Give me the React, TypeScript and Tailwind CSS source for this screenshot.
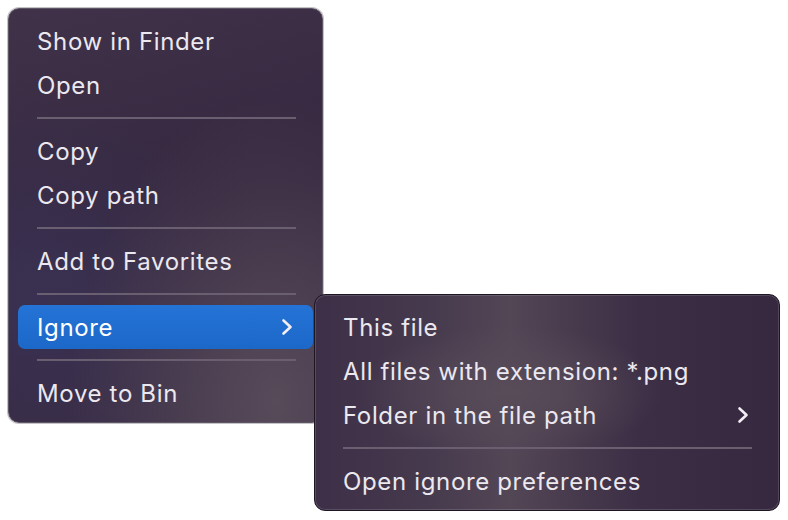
import React from "react";

const Chevron = () => (
  <svg width="12" height="18" viewBox="0 0 12 18" fill="none">
    <polyline points="2.5,2.5 9.5,9 2.5,15.5" stroke="#f2eef4" strokeWidth="2.6" strokeLinecap="round" strokeLinejoin="round" />
  </svg>
);

const Item = ({ label, active, sub }: { label: string; active?: boolean; sub?: boolean }) => (
  <div
    className={
      "h-[44px] flex items-center justify-between pl-[19px] pr-[20px] rounded-[7px] " +
      (active ? "bg-[linear-gradient(180deg,#2473d6,#1c68c9)] text-white" : "text-[#ece8ef]")
    }
  >
    <span className="leading-none pt-[1px]">{label}</span>
    {sub && <Chevron />}
  </div>
);

const Sep = () => (
  <div className="h-[22px] flex items-center pl-[19px] pr-[17px]">
    <div className="h-[2px] w-full bg-[#6a5f70]" />
  </div>
);

const SubItem = ({ label, sub }: { label: string; sub?: boolean }) => (
  <div className="h-[44px] flex items-center justify-between pl-[18px] pr-[20px] text-[#ece8ef]">
    <span className="leading-none pt-[1px]">{label}</span>
    {sub && <Chevron />}
  </div>
);

export default function App() {
  return (
    <div className="relative w-[788px] h-[520px] bg-white font-['Inter','Noto_Sans',sans-serif] text-[24px] tracking-[0.65px]">
      <div className="absolute left-[8px] top-[8px] w-[315px] h-[415px] rounded-[11px] border border-[#5e5566] shadow-[0_0_0_1px_rgba(20,14,24,0.25)] bg-[radial-gradient(ellipse_at_85%_95%,#574b5a_0%,rgba(87,75,90,0)_55%),radial-gradient(ellipse_at_10%_70%,#3a3152_0%,rgba(58,49,82,0)_50%),linear-gradient(165deg,#3f3249_0%,#35273f_50%,#3a2d45_100%)] pt-[10px] pb-[7px] px-[9px] overflow-hidden">
        <Item label="Show in Finder" />
        <Item label="Open" />
        <Sep />
        <Item label="Copy" />
        <Item label="Copy path" />
        <Sep />
        <Item label="Add to Favorites" />
        <Sep />
        <Item label="Ignore" active sub />
        <Sep />
        <Item label="Move to Bin" />
      </div>
      <div className="absolute left-[314px] top-[294px] w-[466px] h-[217px] rounded-[11px] border border-[#1d1522] shadow-[inset_0_0_0_1px_rgba(255,255,255,0.14)] bg-[radial-gradient(ellipse_at_42%_45%,#594c59_0%,rgba(89,76,89,0)_40%),linear-gradient(90deg,#3d2f47_0%,#463a4e_25%,#534655_42%,#3c2e45_70%,#36283f_100%)] pt-[10px] pb-[7px] px-[10px]">
        <SubItem label="This file" />
        <SubItem label="All files with extension: *.png" />
        <SubItem label="Folder in the file path" sub />
        <div className="h-[22px] flex items-center pl-[18px] pr-[17px]">
          <div className="h-[2px] w-full bg-[#6a5f70]" />
        </div>
        <SubItem label="Open ignore preferences" />
      </div>
    </div>
  );
}
